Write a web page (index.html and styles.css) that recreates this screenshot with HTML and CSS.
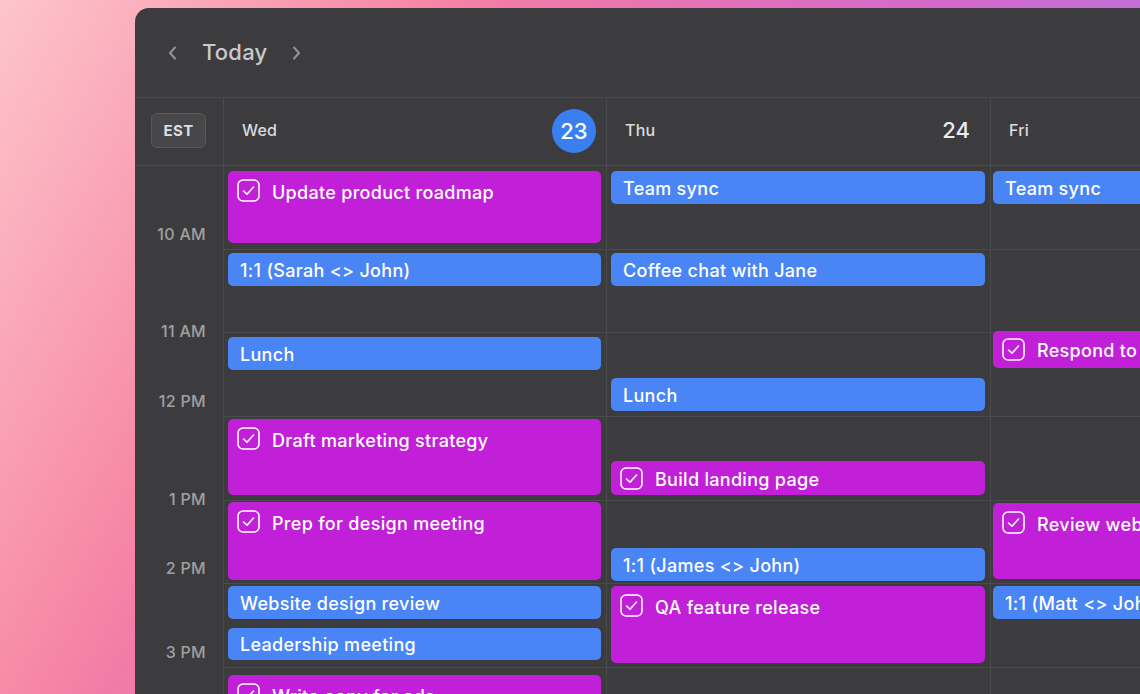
FILE: index.html
```html
<!DOCTYPE html>
<html>
<head>
    <title>Calendar</title>
    <link rel="stylesheet" href="styles.css">
</head>
<body>
    <div class="window">
        <div class="toolbar">
            <svg class="chevron" width="10" height="14" viewBox="0 0 10 14"><path d="M7 1.5 L2 7 L7 12.5"/></svg>
            <span class="today">Today</span>
            <svg class="chevron" width="10" height="14" viewBox="0 0 10 14"><path d="M3 1.5 L8 7 L3 12.5"/></svg>
        </div>

        <div class="calendar">
            <!-- header row -->
            <div class="corner"><span class="tz">EST</span></div>
            <div class="dayhead">
                <span class="dayname">Wed</span>
                <span class="daynum current">23</span>
            </div>
            <div class="dayhead">
                <span class="dayname">Thu</span>
                <span class="daynum">24</span>
            </div>
            <div class="dayhead">
                <span class="dayname">Fri</span>
            </div>

            <!-- time gutter -->
            <div class="gutter">
                <div class="slot"><span class="time near">10 AM</span></div>
                <div class="slot"><span class="time on">11 AM</span></div>
                <div class="slot"><span class="time near">12 PM</span></div>
                <div class="slot"><span class="time on">1 PM</span></div>
                <div class="slot"><span class="time near">2 PM</span></div>
                <div class="slot"><span class="time near">3 PM</span></div>
            </div>

            <!-- Wed -->
            <div class="day">
                <div class="event task" style="top: 5px; height: 72px;">
                    <svg class="check" width="23" height="23" viewBox="0 0 23 23"><rect x="1" y="1" width="21" height="21" rx="5"/><path d="M6.5 12 L10 15.2 L16.5 8"/></svg>
                    <span>Update product roadmap</span>
                </div>
                <div class="event meeting" style="top: 87px; height: 33px;"><span>1:1 (Sarah &lt;&gt; John)</span></div>
                <div class="event meeting" style="top: 171px; height: 33px;"><span>Lunch</span></div>
                <div class="event task" style="top: 253px; height: 76px;">
                    <svg class="check" width="23" height="23" viewBox="0 0 23 23"><rect x="1" y="1" width="21" height="21" rx="5"/><path d="M6.5 12 L10 15.2 L16.5 8"/></svg>
                    <span>Draft marketing strategy</span>
                </div>
                <div class="event task" style="top: 336px; height: 78px;">
                    <svg class="check" width="23" height="23" viewBox="0 0 23 23"><rect x="1" y="1" width="21" height="21" rx="5"/><path d="M6.5 12 L10 15.2 L16.5 8"/></svg>
                    <span>Prep for design meeting</span>
                </div>
                <div class="event meeting" style="top: 420px; height: 33px;"><span>Website design review</span></div>
                <div class="event meeting" style="top: 462px; height: 32px;"><span>Leadership meeting</span></div>
                <div class="event task" style="top: 509px; height: 70px;">
                    <svg class="check" width="23" height="23" viewBox="0 0 23 23"><rect x="1" y="1" width="21" height="21" rx="5"/><path d="M6.5 12 L10 15.2 L16.5 8"/></svg>
                    <span>Write copy for ads</span>
                </div>
            </div>

            <!-- Thu -->
            <div class="day">
                <div class="event meeting" style="top: 5px; height: 33px;"><span>Team sync</span></div>
                <div class="event meeting" style="top: 87px; height: 33px;"><span>Coffee chat with Jane</span></div>
                <div class="event meeting" style="top: 212px; height: 33px;"><span>Lunch</span></div>
                <div class="event task short" style="top: 295px; height: 34px;">
                    <svg class="check" width="23" height="23" viewBox="0 0 23 23"><rect x="1" y="1" width="21" height="21" rx="5"/><path d="M6.5 12 L10 15.2 L16.5 8"/></svg>
                    <span>Build landing page</span>
                </div>
                <div class="event meeting" style="top: 382px; height: 33px;"><span>1:1 (James &lt;&gt; John)</span></div>
                <div class="event task" style="top: 420px; height: 77px;">
                    <svg class="check" width="23" height="23" viewBox="0 0 23 23"><rect x="1" y="1" width="21" height="21" rx="5"/><path d="M6.5 12 L10 15.2 L16.5 8"/></svg>
                    <span>QA feature release</span>
                </div>
            </div>

            <!-- Fri -->
            <div class="day last">
                <div class="event meeting" style="top: 5px; height: 33px;"><span>Team sync</span></div>
                <div class="event task short" style="top: 165px; height: 37px;">
                    <svg class="check" width="23" height="23" viewBox="0 0 23 23"><rect x="1" y="1" width="21" height="21" rx="5"/><path d="M6.5 12 L10 15.2 L16.5 8"/></svg>
                    <span>Respond to customer emails</span>
                </div>
                <div class="event task" style="top: 337px; height: 76px;">
                    <svg class="check" width="23" height="23" viewBox="0 0 23 23"><rect x="1" y="1" width="21" height="21" rx="5"/><path d="M6.5 12 L10 15.2 L16.5 8"/></svg>
                    <span>Review website copy</span>
                </div>
                <div class="event meeting" style="top: 420px; height: 33px;"><span>1:1 (Matt &lt;&gt; John)</span></div>
            </div>
        </div>
    </div>
</body>
</html>
```

FILE: styles.css
```css
html, body {
    margin: 0;
    height: 694px;
    overflow: hidden;
}

body {
    padding: 8px 0 0 135px;
    box-sizing: border-box;
    font-family: Inter, "Noto Sans", sans-serif;
    background: linear-gradient(120deg, #fdc5cb 0%, #f78ba7 26%, #f27ba6 33%, #d268cc 62%, #c070d8 76%, #b070e0 100%);
}

.window {
    width: 1240px;
    height: 720px;
    background-color: #3c3c3e;
    border-radius: 14px 0 0 0;
    overflow: hidden;
}

/* top bar with Today */
.toolbar {
    height: 89px;
    display: flex;
    align-items: center;
    padding-left: 33px;
    gap: 21px;
    box-sizing: border-box;
}

.chevron path {
    fill: none;
    stroke: #939395;
    stroke-width: 2;
    stroke-linecap: round;
    stroke-linejoin: round;
}

.today {
    color: #c9c9cb;
    font-size: 22px;
    font-weight: 500;
    letter-spacing: 0.2px;
    margin: 0 3px 2px;
}

.calendar {
    display: grid;
    grid-template-columns: 88px 383px 384px 384px;
    grid-template-rows: 68px 560px;
    border-top: 1px solid #4a4a4d;
}

.corner,
.dayhead {
    border-bottom: 1px solid #4a4a4d;
    display: flex;
    align-items: center;
}

.corner {
    justify-content: center;
}

.tz {
    display: inline-block;
    padding: 7px 11px;
    font-size: 15px;
    font-weight: 700;
    color: #dedee0;
    background-color: #47474a;
    border: 1px solid #58585b;
    border-radius: 6px;
    letter-spacing: 0.4px;
    margin: 0 0 2px -1px;
}

.dayhead {
    border-left: 1px solid #4a4a4d;
    justify-content: space-between;
    padding: 0 20px 3px 18px;
}

.dayname {
    color: #dcdcde;
    font-size: 16px;
    font-weight: 500;
    letter-spacing: 0.2px;
}

.daynum {
    color: #ececee;
    font-size: 22px;
    font-weight: 500;
}

.daynum.current {
    width: 44px;
    height: 44px;
    border-radius: 50%;
    background-color: #3a7ff0;
    color: #ffffff;
    display: flex;
    align-items: center;
    justify-content: center;
    margin: 2px -10px 0 0;
}

/* time labels */
.gutter {
    display: flex;
    flex-direction: column;
}

.slot {
    height: 83.67px;
    flex-shrink: 0;
    display: flex;
    align-items: flex-end;
    justify-content: flex-end;
    padding-right: 17px;
}

.time {
    color: #a0a0a2;
    font-size: 16px;
    font-weight: 500;
    letter-spacing: 0.3px;
    line-height: 18px;
}

.time.near {
    margin-bottom: 7px;
}

.time.on {
    transform: translateY(7px);
}

.day {
    position: relative;
    border-left: 1px solid #4a4a4d;
    background-image: repeating-linear-gradient(to bottom, transparent 0, transparent 82.67px, #4a4a4d 82.67px, #4a4a4d 83.67px);
}

.event {
    position: absolute;
    left: 4px;
    right: 5px;
    box-sizing: border-box;
    border-radius: 5px;
    color: #ffffff;
    font-size: 18px;
    font-weight: 500;
    letter-spacing: 0.3px;
    display: flex;
    white-space: nowrap;
    overflow: hidden;
}

.day.last .event {
    left: 2px;
}

.meeting {
    background-color: #4a85f5;
    align-items: center;
    padding: 1px 12px 0;
}

.task {
    background-color: #c11fd8;
    align-items: flex-start;
    padding: 8px 9px 0;
    gap: 12px;
}

.task span {
    line-height: 23px;
    margin-top: 2px;
}

.task.short {
    align-items: center;
    padding-top: 0;
}

.task.short span {
    margin-top: 2px;
}

.check {
    flex-shrink: 0;
}

.check rect,
.check path {
    fill: none;
    stroke: #ffffff;
    stroke-width: 1.6;
    stroke-linecap: round;
    stroke-linejoin: round;
}
```
